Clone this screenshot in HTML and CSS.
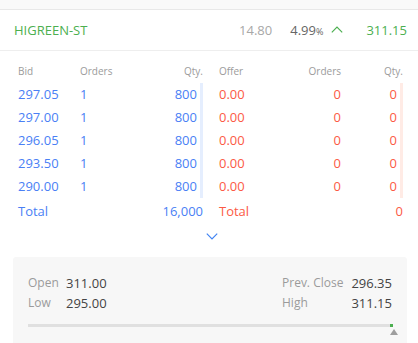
FILE: index.html
```html
<!DOCTYPE html>
<html>
<head>
<meta charset="utf-8">
<link rel="stylesheet" href="styles.css">
</head>
<body>
<div class="topbar"></div>
<div class="quote">
  <span class="sym">HIGREEN-ST</span>
  <div class="quote-right">
    <span class="chg">14.80</span>
    <span class="pct">4.99<small>%</small></span>
    <svg class="up" width="12" height="7" viewBox="0 0 12 7"><polyline points="0.8,6.3 6,1.1 11.2,6.3" fill="none" stroke="#4caf50" stroke-width="1.2"/></svg>
    <span class="ltp">311.15</span>
  </div>
</div>
<div class="depth">
  <div class="side bids">
    <div class="row head"><span>Bid</span><span>Orders</span><span class="r">Qty.</span></div>
    <div class="row"><span>297.05</span><span>1</span><span class="r q">800</span></div>
    <div class="row"><span>297.00</span><span>1</span><span class="r q">800</span></div>
    <div class="row"><span>296.05</span><span>1</span><span class="r q">800</span></div>
    <div class="row"><span>293.50</span><span>1</span><span class="r q">800</span></div>
    <div class="row"><span>290.00</span><span>1</span><span class="r q">800</span></div>
    <div class="row total"><span>Total</span><span></span><span class="r">16,000</span></div>
  </div>
  <div class="side offers">
    <div class="row head"><span>Offer</span><span class="r">Orders</span><span class="r">Qty.</span></div>
    <div class="row"><span>0.00</span><span class="r">0</span><span class="r q">0</span></div>
    <div class="row"><span>0.00</span><span class="r">0</span><span class="r q">0</span></div>
    <div class="row"><span>0.00</span><span class="r">0</span><span class="r q">0</span></div>
    <div class="row"><span>0.00</span><span class="r">0</span><span class="r q">0</span></div>
    <div class="row"><span>0.00</span><span class="r">0</span><span class="r q">0</span></div>
    <div class="row total"><span>Total</span><span></span><span class="r">0</span></div>
  </div>
</div>
<div class="more">
  <svg width="12" height="7" viewBox="0 0 12 7"><polyline points="0.8,0.7 6,5.9 11.2,0.7" fill="none" stroke="#4184f3" stroke-width="1.2"/></svg>
</div>
<div class="stats">
  <div class="stats-grid">
    <div class="kv-left">
      <span class="k">Open</span><span class="v">311.00</span>
      <span class="k">Low</span><span class="v">295.00</span>
    </div>
    <div class="kv-right">
      <span class="k">Prev. Close</span><span class="v">296.35</span>
      <span class="k">High</span><span class="v">311.15</span>
    </div>
  </div>
  <div class="range">
    <div class="track"></div>
    <span class="mark"></span>
    <span class="tri"></span>
  </div>
</div>
</body>
</html>
```
FILE: styles.css
```css
* { box-sizing: border-box; }
html, body {
  margin: 0;
  padding: 0;
  background: #fff;
  font-family: "Open Sans", "Noto Sans", sans-serif;
  overflow: hidden;
}
.topbar {
  height: 10px;
  background: #f9f9f9;
  border-bottom: 1px solid #e8e8e8;
}
.quote {
  height: 41px;
  border-bottom: 1px solid #eeeeee;
  display: flex;
  align-items: center;
  justify-content: space-between;
  padding: 0 11px 0 14px;
  font-size: 13px;
}
.sym { color: #4caf50; }
.quote-right {
  display: flex;
  align-items: center;
}
.chg { color: #a8a8a8; margin-right: 18px; }
.pct { color: #666; margin-right: 8px; }
.pct small { font-size: 9px; }
.up { margin-right: 23px; margin-top: -2px; }
.ltp { color: #4caf50; }

.depth {
  display: grid;
  grid-template-columns: 185px 184px;
  column-gap: 16px;
  padding: 10px 0 0 18px;
}
.row {
  display: grid;
  height: 23px;
  align-items: center;
  font-size: 13px;
}
.row > span { line-height: 23px; height: 23px; }
.bids .row { grid-template-columns: 62px 62px 61px; color: #4a7ff5; }
.offers .row { grid-template-columns: 60px 62px 62px; color: #fc5a45; }
.row.head {
  height: 21px;
  margin-bottom: 1px;
  font-size: 10px;
  color: #9b9b9b;
}
.row.head > span { line-height: 21px; height: 21px; }
.r { text-align: right; }
.q { padding-right: 6px; }
.bids .q { box-shadow: inset -3px 0 0 #e5eefe; }
.offers .q { box-shadow: inset -3px 0 0 #ffebe5; }
.row.total { margin-top: 2px; }

.more {
  display: flex;
  justify-content: center;
  align-items: center;
  height: 14px;
  margin-top: 6px;
  padding-left: 6px;
}

.stats {
  margin: 14px 11px 0 13px;
  background: #f7f7f7;
  border-radius: 3px;
  padding: 16px 15px 30px 15px;
}
.stats-grid {
  display: flex;
  justify-content: space-between;
}
.kv-left {
  display: grid;
  grid-template-columns: 38px auto;
  line-height: 20px;
}
.kv-right {
  display: grid;
  grid-template-columns: auto auto;
  column-gap: 8px;
  line-height: 20px;
}
.kv-right .v { text-align: right; }
.k { font-size: 12px; color: #9b9b9b; }
.v { font-size: 13px; color: #444; }
.range {
  position: relative;
  margin-top: 11px;
  margin-right: -1px;
  height: 3px;
}
.track {
  height: 3px;
  background: #e0e0e0;
}
.mark {
  position: absolute;
  right: 0;
  top: 0;
  width: 3px;
  height: 3px;
  background: #4caf50;
}
.tri {
  position: absolute;
  right: -5px;
  top: 5px;
  width: 0;
  height: 0;
  border-left: 4px solid transparent;
  border-right: 4px solid transparent;
  border-bottom: 6px solid #9e9e9e;
}
```
